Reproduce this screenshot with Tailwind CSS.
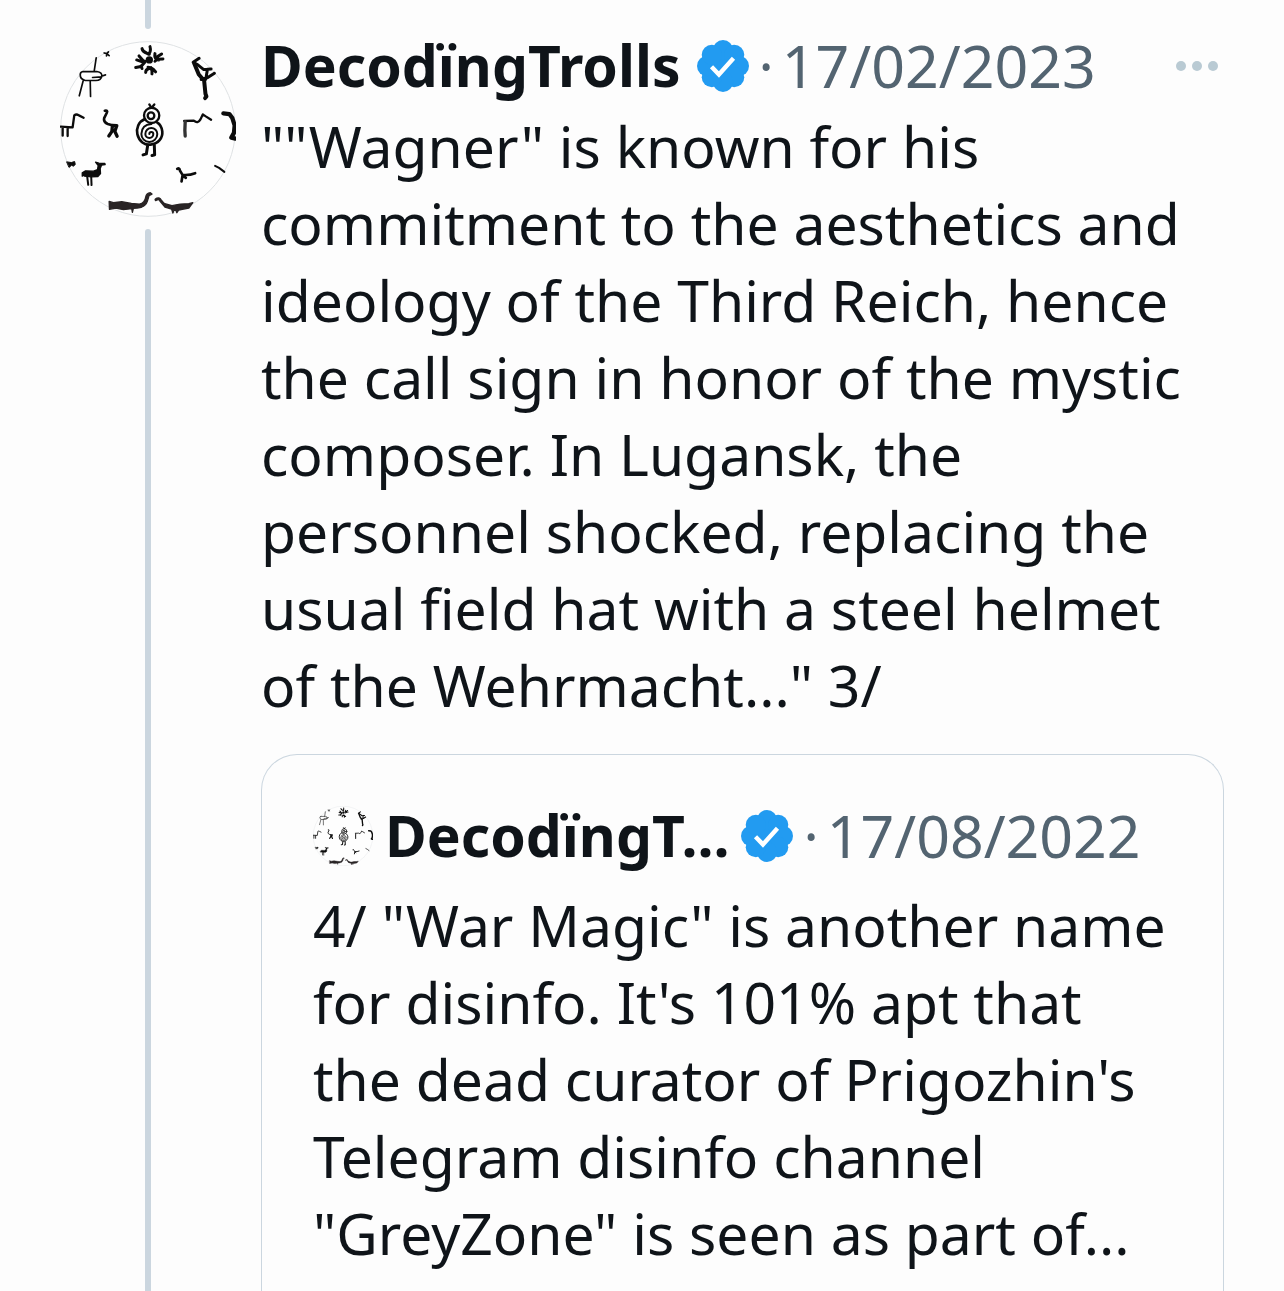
<!DOCTYPE html>
<html lang="en">

<head>
  <meta charset="UTF-8">
  <meta name="viewport" content="width=device-width, initial-scale=1.0">
  <title>DecodïngTrolls thread</title>
  <script src="https://cdn.jsdelivr.net/npm/@tailwindcss/browser@4"></script>
</head>

<body class="bg-[#fdfdfd] text-[#0f1419] font-['Noto_Sans',sans-serif] text-[57px] leading-[77px]">

  <!-- Shared drawings -->
  <svg class="hidden" aria-hidden="true">
    <symbol id="avatar" viewBox="30 33 530 530">
      <clipPath id="avatarClip"><circle cx="295" cy="298" r="265" /></clipPath>
      <circle cx="295" cy="298" r="263" fill="#fefefe" stroke="#dfe2e4" stroke-width="3" />
      <g clip-path="url(#avatarClip)" fill="none" stroke="#0c0c0c" stroke-linecap="round" stroke-linejoin="round">
        <!-- sun -->
        <circle cx="299" cy="90" r="11" fill="#0c0c0c" stroke="none" />
        <path stroke-width="9" d="M277 56q2 10 15 14l7 3M301 50q4 14-4 23M316 71q-2 12 4 17l20-1M316 94q4-6 12-4M324 80l12-8M261 90l17 6 8-2M268 78l14 16M258 113l16-3 12-14M274 108l3 8M288 128q0-10 8-11l8-4M295 112q14 0 12 20M304 114q8 4 14 12" />
        <!-- oval-bodied animal, top left -->
        <path stroke-width="5" d="M163 69l8 2 5-5M171 71l-1 7M172 72l6 5M139 84l-6 40M99 125h42q16 2 15 14-2 13-18 13h-32q-16-4-15-18 0-8 8-9M128 143l27-2M155 139l12-4M100 152l-12 46M121 153l1 47" />
        <!-- dancing figure -->
        <path stroke-width="9" d="M431 97l18-12M431 97l14 8 18 14 22-2M474 118l-5 30M455 149l20-6 20-13" />
        <path stroke-width="12" d="M434 100l14 34 16 18 4 40 3 8-4 5" />
        <!-- left walker -->
        <path stroke-width="7" d="M32 291l36 2 5-36q6-5 14 0l14 7M38 294v24M53 295v24" />
        <!-- long neck -->
        <path stroke-width="8" d="M165 243q10-2 6 6l-8 16q-3 12 11 18l13 4" />
        <path stroke-width="10" d="M187 287l14 1-6 17 7 15M188 288l-2 18-9 13" />
        <!-- spiral bird -->
        <path stroke-width="7" d="M299 224l6 10M306 234l8-10" />
        <circle cx="306" cy="257" r="23" stroke-width="7" />
        <circle cx="304" cy="258" r="10" stroke-width="7" />
        <path stroke-width="8" d="M286 268c-20 8-27 28-23 46 5 22 22 33 40 31 23-3 37-20 35-40-2-14-8-22-15-26" />
        <path stroke-width="6" d="M299 313a6 6 0 0 1 12 0a12 12 0 0 1-24 0a18 18 0 0 1 36 0a24 24 0 0 1-48 0q1-28 30-30" />
        <path stroke-width="9" d="M294 348l-4 25-10 3M314 346l1 30-8 2" />
        <!-- right grazer -->
        <path stroke-width="7" d="M404 274l29-1q12 10 20-4l7-15 9 6 16 10" />
        <path stroke-width="10" stroke="#333" d="M407 276l-1 26 1 17" />
        <!-- figure cut by the right edge -->
        <path stroke-width="13" d="M522 251l18 2 9 12 7 22-2 22-8 15 12 3" />
        <!-- small animals -->
        <path fill="#0c0c0c" stroke-width="3" d="M51 397l13 2 10-3 2 9-6 5-5-3-7 6z" />
        <path fill="#0c0c0c" stroke-width="4" d="M97 430l10-6 24 1 12-5 2-12-8-10 10 3 18 1 1 3-11 2-4 10 1 15-8 9-20 1-20-2-3-3-4 3z" />
        <path stroke-width="6" d="M112 442l3 24M124 442l1 25" />
        <path stroke-width="8" d="M383 418q7-4 8 5l8 13q20 2 38-5M399 438l-3 18M402 440l7 5" />
        <path stroke-width="6" d="M497 409l12 6 16 12" />
        <!-- swimmers along the bottom -->
        <path fill="#292425" stroke="#292425" stroke-width="4" d="M178 516l13 4 25-3 29 5 24 2q17-3 19-21 2-12 14-13l5 4-9 5-5 17q-5 18-30 20l-12 1-3 12-2-11-25 3-23-5-19 4z" />
        <path stroke="#292425" stroke-width="9" d="M319 511q9-8 15 4l12 14 24 4" />
        <path fill="#292425" stroke="#292425" stroke-width="4" d="M343 522l24 7 25-5 26-1 12-3-12 16-31 6-5 8-3-8-6 1-3 8-4-12-20-6z" />
      </g>
    </symbol>
    <symbol id="verified" viewBox="0 0 154 154">
      <g fill="#229bf1">
        <circle cx="77" cy="77" r="56" />
        <circle cx="77" cy="30" r="30" />
        <circle cx="110" cy="44" r="30" />
        <circle cx="124" cy="77" r="30" />
        <circle cx="110" cy="110" r="30" />
        <circle cx="77" cy="124" r="30" />
        <circle cx="44" cy="110" r="30" />
        <circle cx="30" cy="77" r="30" />
        <circle cx="44" cy="44" r="30" />
      </g>
      <path d="M43 79l22 23 43-48" fill="none" stroke="#fff" stroke-width="13" />
    </symbol>
  </svg>

  <article class="flex min-h-screen px-[60px]">
    <!-- Avatar with the thread line above and below -->
    <div class="flex w-[176px] shrink-0 flex-col items-center">
      <div class="h-[29px] w-[6px] rounded-b-full bg-[#cbd6df]"></div>
      <svg class="my-3 size-[176px] shrink-0" role="img" aria-label="DecodïngTrolls"><use href="#avatar" /></svg>
      <div class="w-[6px] grow rounded-t-full bg-[#cbd6df]"></div>
    </div>

    <div class="ml-[25px] flex min-w-0 grow flex-col pt-[27px]">
      <header class="flex items-center">
        <a href="#" class="font-bold">DecodïngTrolls</a>
        <svg class="ml-4 size-[52px] shrink-0" role="img" aria-label="Verified"><use href="#verified" /></svg>
        <span class="ml-[10px] text-[#536471]">·</span>
        <time class="ml-2 text-[59px] text-[#536471]">17/02/2023</time>
        <button type="button" aria-label="More" class="ml-auto mr-[6px] flex gap-[6px] py-4">
          <span class="size-[10px] rounded-full bg-[#b9cad3]"></span>
          <span class="size-[10px] rounded-full bg-[#b9cad3]"></span>
          <span class="size-[10px] rounded-full bg-[#b9cad3]"></span>
        </button>
      </header>

      <p class="mt-1 whitespace-nowrap">
        ""Wagner" is known for his<br>
        commitment to the aesthetics and<br>
        ideology of the Third Reich, hence<br>
        the call sign in honor of the mystic<br>
        composer. In Lugansk, the<br>
        personnel shocked, replacing the<br>
        usual field hat with a steel helmet<br>
        of the Wehrmacht..." 3/
      </p>

      <!-- Quoted tweet -->
      <section class="mt-[30px] grow rounded-t-[36px] border-x border-t border-[#cbd6df] px-[51px] pt-[42px] pb-[18px]">
        <header class="flex items-center">
          <svg class="size-[60px] shrink-0" role="img" aria-label="DecodïngTrolls"><use href="#avatar" /></svg>
          <a href="#" class="ml-3 font-bold">DecodïngT...</a>
          <svg class="ml-3 size-[52px] shrink-0" role="img" aria-label="Verified"><use href="#verified" /></svg>
          <span class="ml-[10px] text-[#536471]">·</span>
          <time class="ml-2 text-[59px] text-[#536471]">17/08/2022</time>
        </header>
        <p class="mt-[13px] whitespace-nowrap">
          4/ "War Magic" is another name<br>
          for disinfo. It's 101% apt that<br>
          the dead curator of Prigozhin's<br>
          Telegram disinfo channel<br>
          "GreyZone" is seen as part of...
        </p>
      </section>
    </div>
  </article>

</body>

</html>
